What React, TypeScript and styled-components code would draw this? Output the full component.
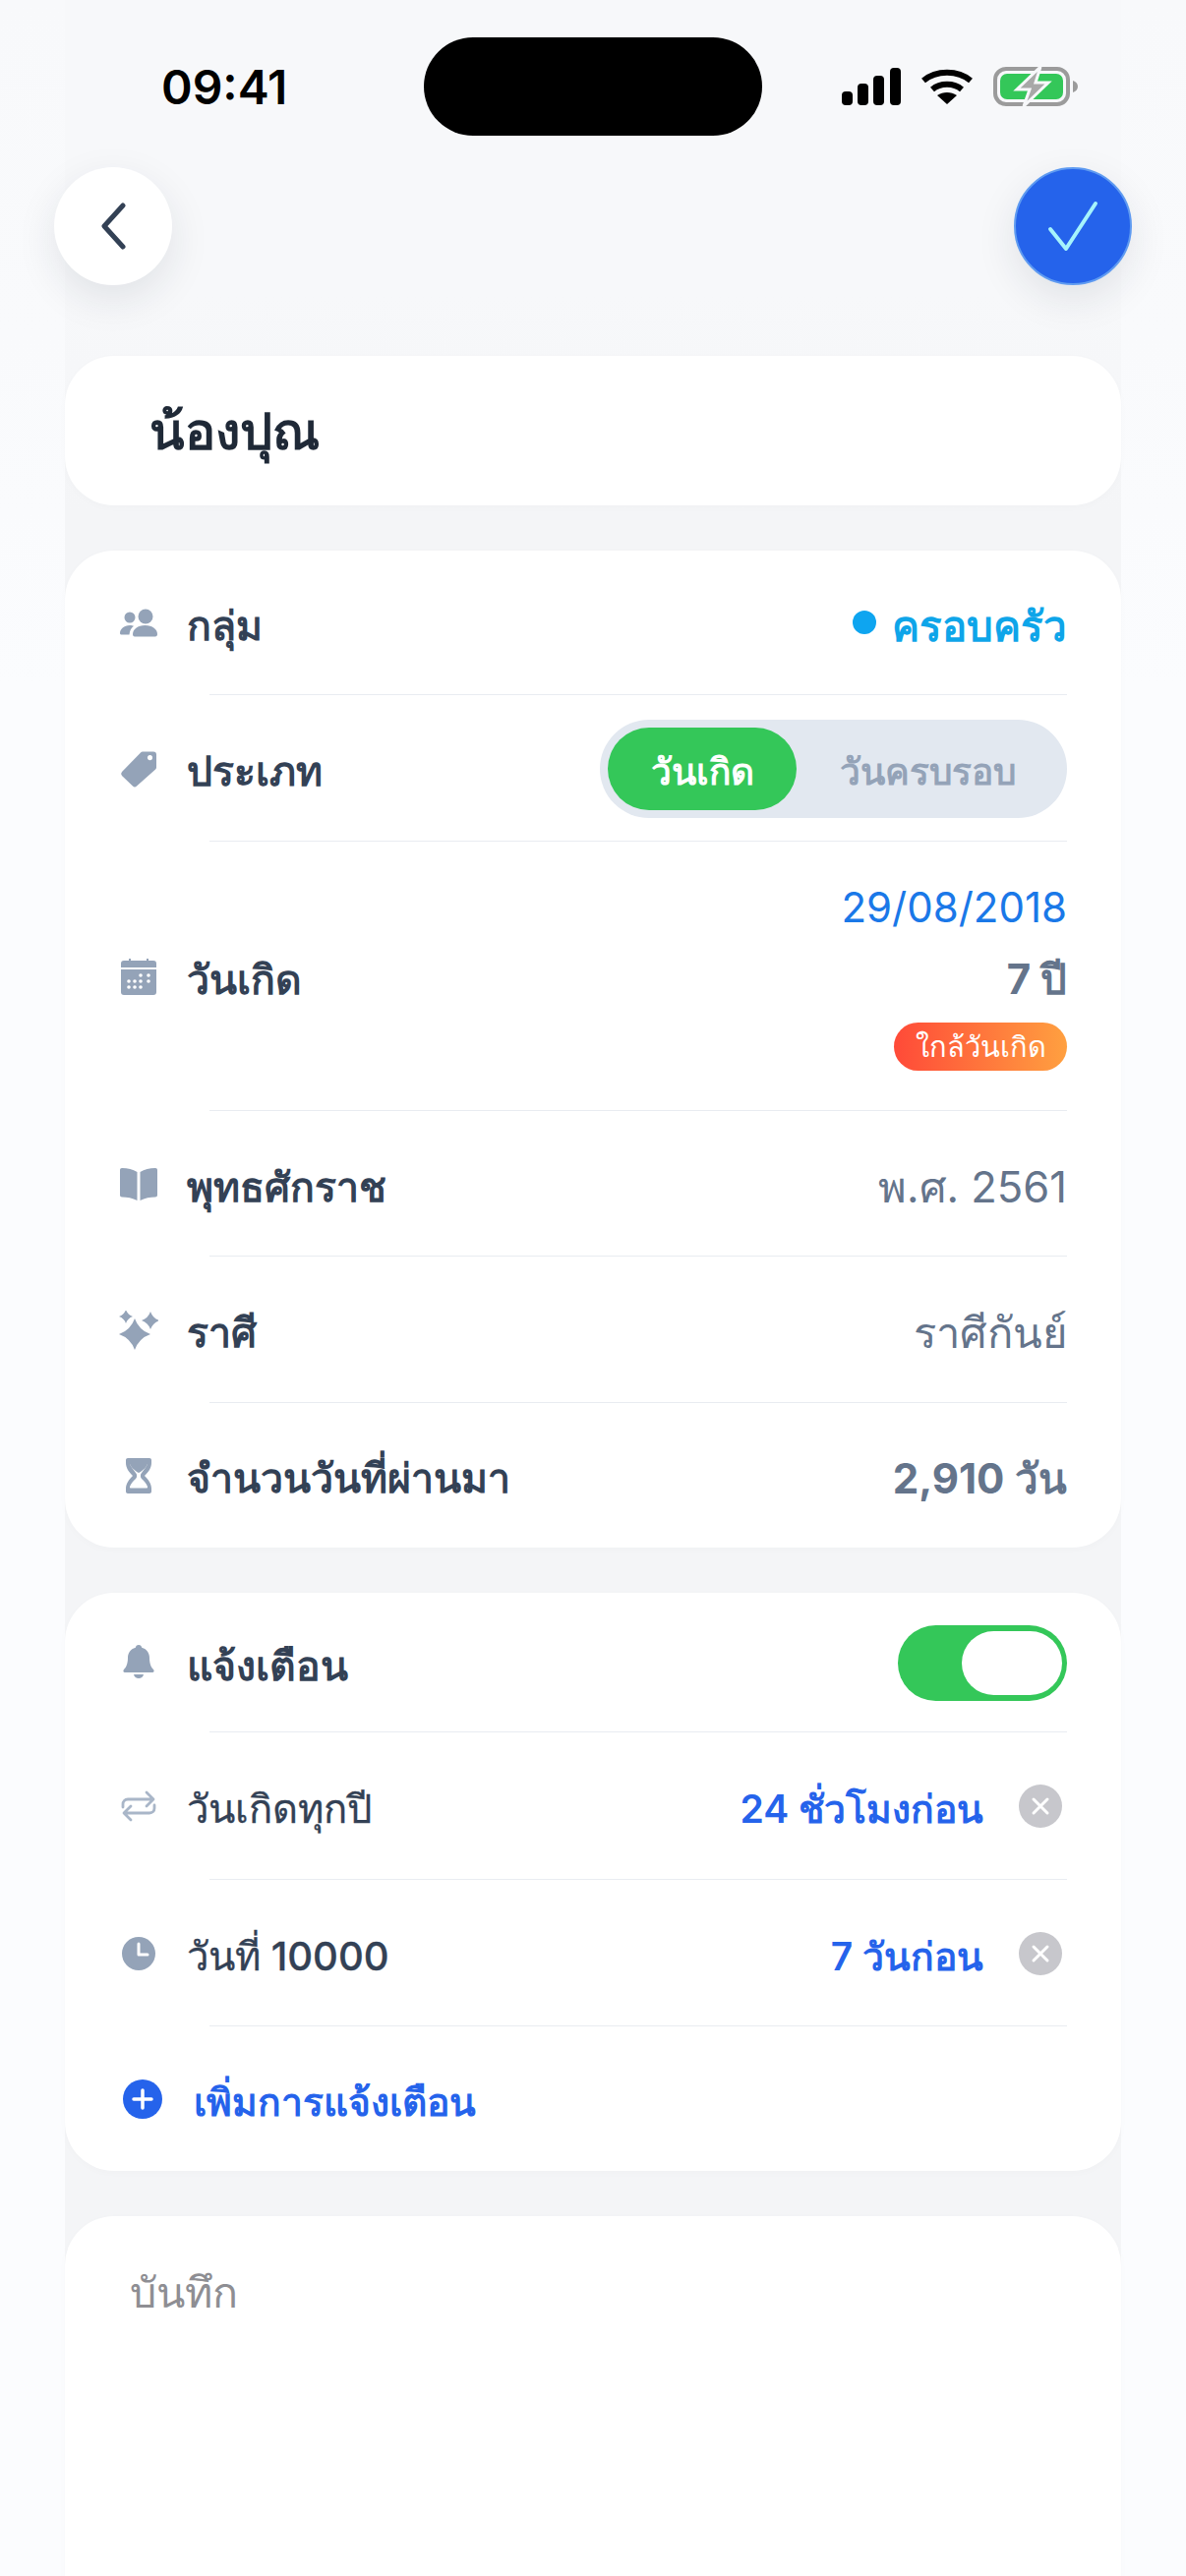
import React from 'react';
import styled, { createGlobalStyle } from 'styled-components';

const GlobalStyle = createGlobalStyle`
  html, body {
    margin: 0;
    padding: 0;
    background: #fbfcfd;
    font-family: Inter, "Noto Sans", "Liberation Sans", sans-serif;
  }
`;

const Screen = styled.div`
  width: 1206px;
  height: 2620px;
  overflow: hidden;
  background: linear-gradient(180deg, #f8f9fb 0, #f9fafc 340px, #fbfcfe 700px);
`;

const Column = styled.div`
  width: 1074px;
  height: 100%;
  margin-left: 66px;
  background: linear-gradient(180deg, #f7f8fa 0, #f7f8fa 300px, #f4f5f7 520px);
`;

const StatusBar = styled.div`
  display: grid;
  grid-template-columns: 365px 344px 1fr;
  align-items: center;
  padding-top: 38px;
`;

const Time = styled.div`
  padding-left: 98px;
  font-size: 48px;
  font-weight: 600;
  color: #000;
`;

const Island = styled.div`
  height: 100px;
  border-radius: 50px;
  background: #000;
`;

const StatusIcons = styled.div`
  display: flex;
  align-items: center;
  padding-left: 81px;
  gap: 20px;
`;

const Nav = styled.div`
  display: flex;
  justify-content: space-between;
  margin: 32px -11px 72px -11px;
`;

const RoundButton = styled.button<{ $primary?: boolean }>`
  width: 120px;
  height: 120px;
  padding: 0;
  display: flex;
  align-items: center;
  justify-content: center;
  border-radius: 50%;
  border: ${(p) => (p.$primary ? '2px solid #5f9bf1' : 'none')};
  background: ${(p) => (p.$primary ? '#2563eb' : '#fff')};
  box-shadow: 0 14px 40px rgba(30, 41, 59, 0.1);
`;

const Card = styled.section`
  background: #fff;
  border-radius: 50px;
  margin-bottom: 46px;
  box-shadow: 0 2px 8px rgba(30, 41, 59, 0.02);
`;

const NameCard = styled(Card)`
  height: 152px;
  display: flex;
  align-items: center;
  padding-left: 86px;
  font-size: 52px;
  font-weight: 700;
  color: #1f2937;
`;

const Row = styled.div<{ $height?: number; $last?: boolean }>`
  position: relative;
  display: flex;
  align-items: center;
  height: ${(p) => p.$height ?? 148}px;
  padding: 0 55px;
  &::after {
    content: '';
    display: ${(p) => (p.$last ? 'none' : 'block')};
    position: absolute;
    left: 147px;
    right: 55px;
    bottom: 0;
    height: 1px;
    background: #e9ecf1;
  }
`;

const IconSlot = styled.span`
  width: 40px;
  height: 40px;
  flex: none;
  margin-right: 29px;
  display: flex;
  svg {
    display: block;
  }
`;

const Label = styled.span<{ $medium?: boolean }>`
  flex: 1;
  padding-top: 6px;
  font-size: ${(p) => (p.$medium ? 40 : 41)}px;
  font-weight: ${(p) => (p.$medium ? 500 : 600)};
  color: #334155;
  -webkit-text-stroke: ${(p) => (p.$medium ? '0.3px #334155' : '0')};
`;

const GroupValue = styled.span`
  display: flex;
  align-items: center;
  gap: 16px;
  padding-top: 6px;
  font-size: 42px;
  font-weight: 600;
  color: #0ea5e9;
`;

const GroupDot = styled.span`
  width: 24px;
  height: 24px;
  margin-top: -8px;
  border-radius: 50%;
  background: #0ea5f0;
`;

const Segment = styled.div`
  display: flex;
  width: 475px;
  height: 100px;
  padding: 8px;
  box-sizing: border-box;
  border-radius: 50px;
  background: #e2e8f0;
`;

const SegmentItem = styled.span<{ $active?: boolean }>`
  display: flex;
  align-items: center;
  justify-content: center;
  width: ${(p) => (p.$active ? '192px' : '267px')};
  padding-top: 5px;
  box-sizing: border-box;
  border-radius: 42px;
  font-size: 37px;
  font-weight: 600;
  color: ${(p) => (p.$active ? '#fff' : '#94a3b8')};
  background: ${(p) => (p.$active ? '#34c759' : 'transparent')};
`;

const DateStack = styled.div`
  display: flex;
  flex-direction: column;
  align-items: flex-end;
  gap: 12px;
`;

const DateText = styled.span`
  font-size: 42px;
  color: #1a78e8;
`;

const AgeText = styled.span`
  padding-top: 3px;
  font-size: 42px;
  font-weight: 700;
  color: #64748b;
`;

const SoonBadge = styled.span`
  display: flex;
  align-items: center;
  justify-content: center;
  width: 176px;
  height: 49px;
  margin-top: -1px;
  border-radius: 25px;
  font-size: 29px;
  font-weight: 500;
  color: #fff;
  background: linear-gradient(90deg, #ff4a38, #ffa040);
`;

const GrayValue = styled.span`
  padding-top: 6px;
  font-size: 43.5px;
  color: #64748b;
`;

const DaysValue = styled.span`
  padding-top: 6px;
  font-size: 42px;
  font-weight: 600;
  color: #64748b;
  b {
    font-weight: 700;
  }
`;

const Toggle = styled.span`
  display: flex;
  justify-content: flex-end;
  align-items: center;
  width: 172px;
  height: 77px;
  padding-right: 5px;
  box-sizing: border-box;
  border-radius: 39px;
  background: #34c759;
`;

const ToggleKnob = styled.span`
  width: 102px;
  height: 65px;
  border-radius: 33px;
  background: #fff;
`;

const LeadValue = styled.span`
  padding-top: 6px;
  font-size: 39px;
  font-weight: 600;
  color: #2563eb;
`;

const ClearButton = styled.span`
  width: 44px;
  height: 44px;
  margin: 0 5px 0 36px;
  display: flex;
  align-items: center;
  justify-content: center;
  border-radius: 50%;
  background: #c7c7cc;
`;

const AddRow = styled.div`
  display: flex;
  align-items: center;
  height: 147px;
  padding-left: 59px;
  box-sizing: border-box;
  gap: 32px;
`;

const AddLabel = styled.span`
  padding-top: 6px;
  font-size: 39px;
  font-weight: 600;
  color: #2563eb;
`;

const NotesCard = styled(Card)`
  height: 420px;
  padding: 44px 66px;
  box-sizing: border-box;
  margin-bottom: 0;
  font-size: 43px;
  color: #8e8e93;
`;

const ICON = '#94a3b8';

const Icon = ({ children }: { children: React.ReactNode }) => (
  <IconSlot>
    <svg width="40" height="40" viewBox="0 0 40 40" fill={ICON}>
      {children}
    </svg>
  </IconSlot>
);

const star = (cx: number, cy: number, r: number) => {
  const k = r * 0.26;
  return `M${cx} ${cy - r}Q${cx + k} ${cy - k} ${cx + r} ${cy}Q${cx + k} ${cy + k} ${cx} ${cy + r}Q${cx - k} ${cy + k} ${cx - r} ${cy}Q${cx - k} ${cy - k} ${cx} ${cy - r}Z`;
};

const calendarDots = [
  [22, 19], [30, 19],
  [10, 25], [16, 25], [22, 25], [30, 25],
  [10, 31], [16, 31], [22, 31],
];

const App = () => (
  <Screen>
    <GlobalStyle />
    <Column>
      <StatusBar>
        <Time>09:41</Time>
        <Island />
        <StatusIcons>
          <svg width="60" height="38" viewBox="0 0 60 38" fill="#000">
            <rect x="0" y="24" width="11" height="14" rx="4" />
            <rect x="16" y="16" width="11" height="22" rx="4" />
            <rect x="32" y="8" width="11" height="30" rx="4" />
            <rect x="49" y="0" width="11" height="38" rx="4" />
          </svg>
          <svg width="54" height="38" viewBox="0 0 54 38">
            <path d="M3 13C16 2 38 2 51 13M12 22C20 15 34 15 42 22" fill="none" stroke="#000" strokeWidth="6" />
            <path d="M27 37L17 28C23 24 31 24 37 28Z" fill="#000" />
          </svg>
          <svg width="86" height="40" viewBox="0 0 86 40">
            <rect x="2" y="2" width="74" height="36" rx="11" fill="none" stroke="#9b9b9b" strokeWidth="4" />
            <rect x="7" y="7" width="64" height="26" rx="7" fill="#34c759" />
            <path d="M81 14c3 1 5 3 5 6s-2 5-5 6z" fill="#9b9b9b" />
            <path d="M48 0L24 23H37L31 40L56 16H43Z" fill="#a8a8a8" stroke="#f7f8fa" strokeWidth="3" />
          </svg>
        </StatusIcons>
      </StatusBar>

      <Nav>
        <RoundButton>
          <svg width="28" height="48" viewBox="0 0 28 48" fill="none">
            <path d="M24 3L5 24L24 45" stroke="#334155" strokeWidth="5" strokeLinecap="round" strokeLinejoin="round" />
          </svg>
        </RoundButton>
        <RoundButton $primary>
          <svg width="54" height="54" viewBox="0 0 54 54" fill="none">
            <path d="M4 30L20 50L50 4" stroke="#a5f3fc" strokeWidth="4" strokeLinecap="round" strokeLinejoin="round" />
          </svg>
        </RoundButton>
      </Nav>

      <NameCard>น้องปุณ</NameCard>

      <Card>
        <Row $height={147}>
          <Icon>
            <circle cx="11" cy="14" r="5.500" />
            <circle cx="27" cy="13" r="7.500" />
            <path d="M14 31c0-5 5-9 12.500-9S39 26 39 31c0 1.400-.8 2.500-2.200 2.500H16c-1.400 0-2-1-2-2.500z" />
            <path d="M1 30c0-4 4-8 10-8 1.500 0 3 .2 4 .7-3 2-4 5-4.500 8.800H3C1.800 31.500 1 31.200 1 30z" />
          </Icon>
          <Label>กลุ่ม</Label>
          <GroupValue>
            <GroupDot />
            ครอบครัว
          </GroupValue>
        </Row>
        <Row $height={149}>
          <Icon>
            <path
              fillRule="evenodd"
              d="M24 2.500H35a3 3 0 0 1 3 3V18.500a3 3 0 0 1-.9 2.100L18 37.500a3 3 0 0 1-4 0L3 27a3 3 0 0 1 0-4L22 3.400a3 3 0 0 1 2-.9zM31.500 6a2.600 2.600 0 1 0 .01 0z"
            />
          </Icon>
          <Label>ประเภท</Label>
          <Segment>
            <SegmentItem $active>วันเกิด</SegmentItem>
            <SegmentItem>วันครบรอบ</SegmentItem>
          </Segment>
        </Row>
        <Row $height={274}>
          <Icon>
            <path d="M2 11V7a3 3 0 0 1 3-3h5V2h2v2h16V2h2v2h5a3 3 0 0 1 3 3v4z" />
            <path d="M2 13h36v23a3 3 0 0 1-3 3H5a3 3 0 0 1-3-3z" />
            {calendarDots.map(([x, y]) => (
              <circle key={`${x}-${y}`} cx={x} cy={y} r="1.800" fill="#fff" />
            ))}
          </Icon>
          <Label>วันเกิด</Label>
          <DateStack>
            <DateText>29/08/2018</DateText>
            <AgeText>7 ปี</AgeText>
            <SoonBadge>ใกล้วันเกิด</SoonBadge>
          </DateStack>
        </Row>
        <Row $height={148}>
          <Icon>
            <path d="M18.500 37C14 34.500 8 33.500 3 33.500c-1.200 0-2-.8-2-2V6c0-1.200.8-2 2-2 6 0 11 1.500 15.500 4z" />
            <path d="M21.500 37C26 34.500 32 33.500 37 33.500c1.200 0 2-.8 2-2V6c0-1.200-.8-2-2-2-6 0-11 1.500-15.500 4z" />
          </Icon>
          <Label>พุทธศักราช</Label>
          <GrayValue>พ.ศ. 2561</GrayValue>
        </Row>
        <Row $height={149}>
          <Icon>
            <path d={star(16, 24, 16)} />
            <path d={star(7, 6, 7)} />
            <path d={star(32, 10, 9)} />
          </Icon>
          <Label>ราศี</Label>
          <GrayValue>ราศีกันย์</GrayValue>
        </Row>
        <Row $height={147} $last>
          <Icon>
            <path
              fillRule="evenodd"
              d="M9 2h22c1.100 0 2 .9 2 2v3c0 5-3 9-7 13 4 4 7 8 7 13v3c0 1.100-.9 2-2 2H9c-1.100 0-2-.9-2-2v-3c0-5 3-9 7-13-4-4-7-8-7-13V4c0-1.100.9-2 2-2zM11 8c1 3 4 6 6 9 1.500 1.500 1.500 4.500 0 6-3 3-5 5-6 8-.3 1 .5 1.500 1 1.500h16c.5 0 1.300-.5 1-1.500-1-3-3-5-6-8-1.500-1.500-1.500-4.500 0-6 2-3 5-6 6-9z"
            />
            <path d="M11 8h18c-1 3-5 7-9 9-4-2-8-6-9-9z" />
          </Icon>
          <Label>จำนวนวันที่ผ่านมา</Label>
          <DaysValue>
            <b>2,910</b> วัน
          </DaysValue>
        </Row>
      </Card>

      <Card>
        <Row $height={142}>
          <Icon>
            <path d="M20 2c1.800 0 3 1.200 3.200 2.700C28.500 6 31 10.500 31 15c0 6 1.500 9.500 4 12 1.200 1.200.6 3-1 3H6c-1.600 0-2.200-1.800-1-3 2.500-2.500 4-6 4-12 0-4.500 2.500-9 7.800-10.300C17 3.200 18.200 2 20 2z" />
            <path d="M15 32h10c-.5 2.500-2.500 4-5 4s-4.500-1.500-5-4z" />
          </Icon>
          <Label>แจ้งเตือน</Label>
          <Toggle>
            <ToggleKnob />
          </Toggle>
        </Row>
        <Row $height={150}>
          <Icon>
            <path
              d="M4 21v-3c0-3 2-5 5-5h25M28 6l7 7-7 7M36 19v3c0 3-2 5-5 5H6M12 34l-7-7 7-7"
              fill="none"
              stroke="#a9b6c8"
              strokeWidth="2.800"
              strokeLinecap="round"
              strokeLinejoin="round"
            />
          </Icon>
          <Label $medium>วันเกิดทุกปี</Label>
          <LeadValue>24 ชั่วโมงก่อน</LeadValue>
          <ClearButton>
            <svg width="20" height="20" viewBox="0 0 20 20">
              <path d="M3 3L17 17M17 3L3 17" stroke="#fff" strokeWidth="3" strokeLinecap="round" />
            </svg>
          </ClearButton>
        </Row>
        <Row $height={149}>
          <Icon>
            <circle cx="20" cy="20" r="17" />
            <path d="M20 10v11h9" fill="none" stroke="#fff" strokeWidth="3" strokeLinecap="round" strokeLinejoin="round" />
          </Icon>
          <Label $medium>วันที่ 10000</Label>
          <LeadValue>7 วันก่อน</LeadValue>
          <ClearButton>
            <svg width="20" height="20" viewBox="0 0 20 20">
              <path d="M3 3L17 17M17 3L3 17" stroke="#fff" strokeWidth="3" strokeLinecap="round" />
            </svg>
          </ClearButton>
        </Row>
        <AddRow>
          <svg width="40" height="40" viewBox="0 0 40 40">
            <circle cx="20" cy="20" r="20" fill="#2563eb" />
            <path d="M20 11v18M11 20h18" stroke="#fff" strokeWidth="3.500" strokeLinecap="round" />
          </svg>
          <AddLabel>เพิ่มการแจ้งเตือน</AddLabel>
        </AddRow>
      </Card>

      <NotesCard>บันทึก</NotesCard>
    </Column>
  </Screen>
);

export default App;
